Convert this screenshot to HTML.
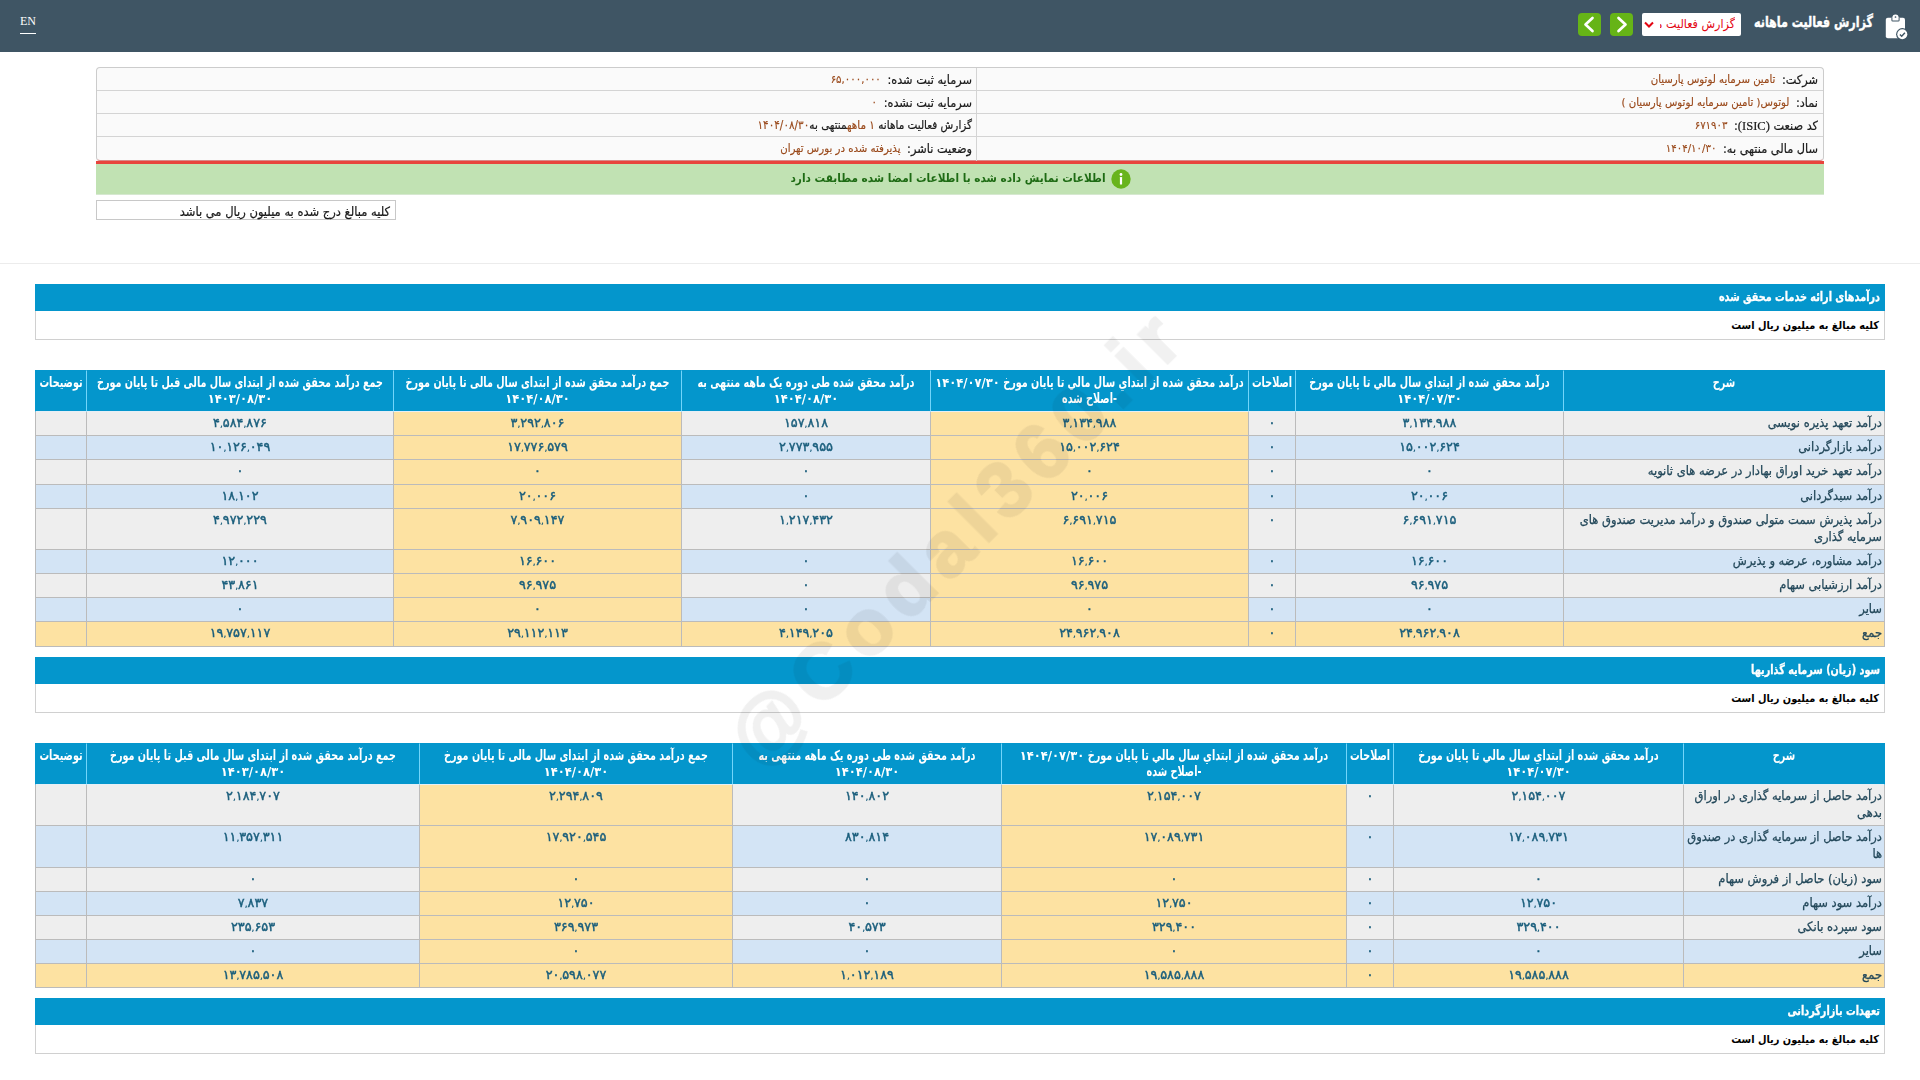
<!DOCTYPE html>
<html lang="fa" dir="rtl">
<head>
<meta charset="utf-8">
<title>گزارش فعالیت ماهانه</title>
<style>
* { box-sizing: border-box; }
html, body { margin: 0; padding: 0; }
body {
  width: 1920px; height: 1080px; overflow: hidden; position: relative;
  background: #fff; color: #000;
  font-family: "DejaVu Sans Condensed", "DejaVu Sans", "Liberation Sans", sans-serif;
  font-stretch: condensed;
  font-size: 12.8px;
  opacity: 0.999;
}
/* ---------- top bar ---------- */
.bar { position: absolute; left: 0; top: 0; width: 1920px; height: 52px; background: #3f5564; }
.bar .en { position: absolute; left: 20px; top: 14px; width: 16px; color: #fff; direction: ltr;
  font-family: "Liberation Serif", serif; font-stretch: normal; font-size: 12px; line-height: 14px; }
.bar .en i { position: absolute; left: 0; top: 19px; width: 16px; height: 1px; background: #fff; }
.bar .title { position: absolute; left: 1700px; width: 173px; top: 13px; text-align: right; color: #fff; font-weight: bold; font-size: 12.4px; line-height: 20px; white-space: nowrap;
  transform: scaleY(1.22); transform-origin: 50% 78%; -webkit-text-stroke: 0.3px #fff; }
.bar .clip { position: absolute; left: 1880px; top: 10px; }
.bar .sel { position: absolute; left: 1642px; top: 13px; width: 99px; height: 23px; background: #fff; border-radius: 2px; }
.bar .sel span { position: absolute; left: 18px; width: 75px; top: 0; height: 23px; overflow: hidden; text-align: right;
  color: #e30613; font-size: 12.4px; line-height: 22px; white-space: nowrap; }
.bar .sel svg { position: absolute; left: 2px; top: 8px; }
.bar .nav { position: absolute; top: 13px; width: 23px; height: 23px; border-radius: 4px; background: #66b417; }
.bar .nav svg { position: absolute; left: 0; top: 0; }

/* ---------- info box ---------- */
.info { position: absolute; left: 96px; top: 67px; width: 1728px; height: 94px; background: #fafafa;
  border: 1px solid #cccccc; border-bottom: 1px solid #d98a8a; border-radius: 4px; }
.info .hl { position: absolute; left: 0; width: 1726px; height: 1px; background: #d4d4d4; }
.info .vl { position: absolute; left: 879px; top: 0; width: 1px; height: 93px; background: #d4d4d4; }
.info .c { position: absolute; height: 23px; line-height: 23px; white-space: nowrap; font-size: 12.6px; color: #1a1a1a; -webkit-text-stroke: 0.2px #1a1a1a; }
.info .c b { font-weight: normal; font-size: 11.3px; color: #9a4a1c; -webkit-text-stroke: 0.15px #9a4a1c; margin-right: 3px; position: relative; top: -1px; }
.info .c b.z { margin-right: 0; top: 0; }
.info .c.sm { font-size: 11.6px; }
.info .c.sm b { font-size: 11.6px; }
.info .c .lat { font-family: "Liberation Serif", serif; font-stretch: normal; font-size: 12.5px; }
.info .c.r { right: 5px; }
.info .c.l { right: 851px; }
.redline { position: absolute; left: 96px; top: 161px; width: 1728px; height: 3px; background: #e8443d; }
.green { position: absolute; left: 96px; top: 164px; width: 1728px; height: 31px; background: #c1e2b3; border-bottom: 1px solid #d6e8d0; }
.green .tx { position: absolute; left: 600px; width: 409.500px; top: 0; text-align: right; white-space: nowrap;
  color: #1e6b14; font-weight: bold; font-size: 11.7px; line-height: 28px; }
.green .ic { position: absolute; left: 1015px; top: 5px; }
.note { position: absolute; left: 96px; top: 200px; width: 300px; height: 20px; border: 1px solid #c8c8c8; background: #fff;
  font-size: 12.8px; line-height: 19px; padding-right: 5px; padding-top: 1px; white-space: nowrap; color: #1a1a1a; -webkit-text-stroke: 0.2px #1a1a1a; }
.sep { position: absolute; left: 0; top: 263px; width: 1920px; height: 1px; background: #ececec; }

/* ---------- sections ---------- */
.sec { position: absolute; left: 35px; width: 1850px; height: 56px; }
.sec .st { height: 27px; background: #0496cc; color: #fff; font-weight: bold; font-size: 10.75px; line-height: 27px; padding-right: 5px; white-space: nowrap; }
.sec .sn { height: 29px; border: 1px solid #d0d0d0; border-top: none; background: #fff; font-weight: bold; font-size: 10.9px; line-height: 29px; padding-right: 5px; white-space: nowrap; }

.sec .st span { display: inline-block; transform: scaleY(1.18); transform-origin: 50% 62%; -webkit-text-stroke: 0.25px #fff; }

/* ---------- data tables ---------- */
table.dt { position: absolute; border-collapse: separate; border-spacing: 0; table-layout: fixed; direction: rtl; }
table.dt th, table.dt td { padding: 0 2px; overflow: hidden; border: 0 solid #bbbbbb; border-left-width: 1px; border-bottom-width: 1px; }
table.dt th:first-child, table.dt td:first-child { border-right-width: 1px; }
table.dt th { background: #0496cc; color: #fff; font-weight: bold; font-size: 10.7px; line-height: 16px; text-align: center; vertical-align: top;
  padding-top: 0; border-top: 1px solid #0496cc; border-left-color: #73d5fa; border-bottom-color: #e6eff6; }
table.dt th:first-child { border-right-color: #0496cc; }
table.dt th:last-child { border-left-color: #0496cc; }
table.dt th div { height: 40px; padding-top: 5px; overflow: hidden; white-space: nowrap; }
table.dt th .hx { display: inline-block; line-height: 16px; transform: scaleY(1.3); transform-origin: 50% 73%; }
table.dt th .dg { font-size: 12.8px; line-height: 14px; }
table.dt td { vertical-align: top; font-size: 12.8px; line-height: 17px; padding-top: 2px; }
table.dt td.d { text-align: right; color: #23485a; -webkit-text-stroke: 0.25px #23485a; }
table.dt td.n { text-align: center; direction: ltr; color: #1a5e7c; font-family: "DejaVu Sans", "Liberation Sans", sans-serif; font-stretch: normal; font-weight: normal; -webkit-text-stroke: 0.45px #1a5e7c; }
table.dt td.n i { font-style: normal; font-size: 9px; -webkit-text-stroke: 0.2px #1a5e7c; }
tr.g td { background: #eeeeee; }
tr.b td { background: #d3e4f5; }
tr.sum td { background: #fde2a2; }
table.dt td.y { background: #fde2a2; }

/* ---------- watermark ---------- */
.wm { position: absolute; left: 557px; top: 486px; width: 800px; height: 100px; line-height: 100px; text-align: center; direction: ltr;
  font-family: "Liberation Sans", sans-serif; font-stretch: normal; font-weight: bold; font-size: 78px; letter-spacing: 9.5px; color: #000; -webkit-text-stroke: 2.500px #000; opacity: 0.06;
  transform: rotate(-45deg); transform-origin: 50% 50%; white-space: nowrap; pointer-events: none; }

</style>
</head>
<body>
<div class="bar">
  <div class="en">EN<i></i></div>
  <svg class="clip" width="32" height="32" viewBox="0 0 32 32">
    <rect x="5.800" y="7.700" width="19.200" height="20.500" rx="2" fill="#fff"/>
    <path d="M11.400 7.700 V10.200 a1.300 1.300 0 0 0 1.300 1.300 h5.600 a1.300 1.300 0 0 0 1.300 -1.300 V7.700 z" fill="#3f5564"/>
    <path d="M12.400 10.500 V7.600 a3.100 3.100 0 0 1 6.200 0 V10.500 z" fill="#fff"/>
    <circle cx="15.500" cy="7" r="0.850" fill="#3f5564"/>
    <circle cx="22.300" cy="24.300" r="6.200" fill="#3f5564"/>
    <circle cx="22.300" cy="24.300" r="5" fill="#fff"/>
    <path d="M19.900 24.500 L21.700 26.200 L24.900 22.700" fill="none" stroke="#3f5564" stroke-width="1.400"/>
  </svg>
  <div class="title">گزارش فعالیت ماهانه</div>
  <div class="sel"><span>گزارش فعالیت ماهانه</span>
    <svg width="10" height="8" viewBox="0 0 10 8"><path d="M1 1.500 L5 5.500 L9 1.500" fill="none" stroke="#e30613" stroke-width="2"/></svg>
  </div>
  <div class="nav" style="left:1610px"><svg width="23" height="23" viewBox="0 0 23 23"><path d="M8.500 5 L15.500 11.500 L8.500 18" fill="none" stroke="#fff" stroke-width="2.700" stroke-linecap="round" stroke-linejoin="round"/></svg></div>
  <div class="nav" style="left:1578px"><svg width="23" height="23" viewBox="0 0 23 23"><path d="M14.500 5 L7.500 11.500 L14.500 18" fill="none" stroke="#fff" stroke-width="2.700" stroke-linecap="round" stroke-linejoin="round"/></svg></div>
</div>

<div class="info">
  <div class="hl" style="top:22px"></div>
  <div class="hl" style="top:45px"></div>
  <div class="hl" style="top:68px"></div>
  <div class="vl"></div>
  <div class="c r" style="top:0">شرکت: <b>تامین سرمایه لوتوس پارسیان</b></div>
  <div class="c r" style="top:23px">نماد: <b>لوتوس( تامین سرمایه لوتوس پارسیان )</b></div>
  <div class="c r" style="top:46px">کد صنعت <span class="lat">(ISIC)</span>: <b>۶۷۱۹۰۳</b></div>
  <div class="c r" style="top:69px">سال مالی منتهی به: <b>۱۴۰۴/۱۰/۳۰</b></div>
  <div class="c l" style="top:0">سرمایه ثبت شده: <b>۶۵,۰۰۰,۰۰۰</b></div>
  <div class="c l" style="top:23px">سرمایه ثبت نشده: <b>۰</b></div>
  <div class="c l sm" style="top:46px">گزارش فعالیت ماهانه <b class="z">۱ ماهه</b>منتهی به<b class="z">۱۴۰۴/۰۸/۳۰</b></div>
  <div class="c l" style="top:69px">وضعیت ناشر: <b>پذیرفته شده در بورس تهران</b></div>
</div>
<div class="redline"></div>
<div class="green"><div class="tx">اطلاعات نمایش داده شده با اطلاعات امضا شده مطابقت دارد</div>
  <svg class="ic" width="20" height="20" viewBox="0 0 20 20"><circle cx="10" cy="10" r="9.700" fill="#68b41c"/><circle cx="10" cy="5.500" r="1.400" fill="#fff"/><rect x="8.900" y="8" width="2.200" height="7.500" rx="0.600" fill="#fff"/></svg>
</div>
<div class="note">کلیه مبالغ درج شده به میلیون ریال می باشد</div>
<div class="sep"></div>

<div class="sec" style="top:284px"><div class="st"><span>درآمدهای ارائه خدمات محقق شده</span></div><div class="sn">کلیه مبالغ به میلیون ریال است</div></div>
<table class="dt t1" style="top:370px;left:35px;width:1850px">
<colgroup><col style="width:322px"><col style="width:268px"><col style="width:47px"><col style="width:318px"><col style="width:249px"><col style="width:288px"><col style="width:307px"><col style="width:51px"></colgroup>
<thead><tr style="height:42px"><th><div><span class="hx">شرح</span></div></th><th><div><span class="hx">درآمد محقق شده از ابتداي سال مالي تا پايان مورخ</span><br><span class="dg">۱۴۰۴/۰۷/۳۰</span></div></th><th><div><span class="hx">اصلاحات</span></div></th><th><div><span class="hx">درآمد محقق شده از ابتداي سال مالي تا پايان مورخ</span> <span class="dg">۱۴۰۴/۰۷/۳۰</span><br><span class="hx">-اصلاح شده</span></div></th><th><div><span class="hx">درآمد محقق شده طی دوره یک ماهه منتهی به</span><br><span class="dg">۱۴۰۴/۰۸/۳۰</span></div></th><th><div><span class="hx">جمع درآمد محقق شده از ابتدای سال مالی تا پایان مورخ</span><br><span class="dg">۱۴۰۴/۰۸/۳۰</span></div></th><th><div><span class="hx">جمع درآمد محقق شده از ابتدای سال مالی قبل تا پایان مورخ</span><br><span class="dg">۱۴۰۳/۰۸/۳۰</span></div></th><th><div><span class="hx">توضیحات</span></div></th></tr></thead>
<tbody>
<tr class="g" style="height:24px"><td class="d">درآمد تعهد پذیره نویسی</td><td class="n">۳<i>,</i>۱۳۴<i>,</i>۹۸۸</td><td class="n">۰</td><td class="n y">۳<i>,</i>۱۳۴<i>,</i>۹۸۸</td><td class="n">۱۵۷<i>,</i>۸۱۸</td><td class="n y">۳<i>,</i>۲۹۲<i>,</i>۸۰۶</td><td class="n">۴<i>,</i>۵۸۴<i>,</i>۸۷۶</td><td></td></tr>
<tr class="b" style="height:24px"><td class="d">درآمد بازارگردانی</td><td class="n">۱۵<i>,</i>۰۰۲<i>,</i>۶۲۴</td><td class="n">۰</td><td class="n y">۱۵<i>,</i>۰۰۲<i>,</i>۶۲۴</td><td class="n">۲<i>,</i>۷۷۳<i>,</i>۹۵۵</td><td class="n y">۱۷<i>,</i>۷۷۶<i>,</i>۵۷۹</td><td class="n">۱۰<i>,</i>۱۲۶<i>,</i>۰۴۹</td><td></td></tr>
<tr class="g" style="height:25px"><td class="d">درآمد تعهد خرید اوراق بهادار در عرضه های ثانویه</td><td class="n">۰</td><td class="n">۰</td><td class="n y">۰</td><td class="n">۰</td><td class="n y">۰</td><td class="n">۰</td><td></td></tr>
<tr class="b" style="height:24px"><td class="d">درآمد سبدگردانی</td><td class="n">۲۰<i>,</i>۰۰۶</td><td class="n">۰</td><td class="n y">۲۰<i>,</i>۰۰۶</td><td class="n">۰</td><td class="n y">۲۰<i>,</i>۰۰۶</td><td class="n">۱۸<i>,</i>۱۰۲</td><td></td></tr>
<tr class="g" style="height:41px"><td class="d">درآمد پذیرش سمت متولی صندوق و درآمد مدیریت صندوق های سرمایه گذاری</td><td class="n">۶<i>,</i>۶۹۱<i>,</i>۷۱۵</td><td class="n">۰</td><td class="n y">۶<i>,</i>۶۹۱<i>,</i>۷۱۵</td><td class="n">۱<i>,</i>۲۱۷<i>,</i>۴۳۲</td><td class="n y">۷<i>,</i>۹۰۹<i>,</i>۱۴۷</td><td class="n">۴<i>,</i>۹۷۲<i>,</i>۲۲۹</td><td></td></tr>
<tr class="b" style="height:24px"><td class="d">درآمد مشاوره، عرضه و پذیرش</td><td class="n">۱۶<i>,</i>۶۰۰</td><td class="n">۰</td><td class="n y">۱۶<i>,</i>۶۰۰</td><td class="n">۰</td><td class="n y">۱۶<i>,</i>۶۰۰</td><td class="n">۱۲<i>,</i>۰۰۰</td><td></td></tr>
<tr class="g" style="height:24px"><td class="d">درآمد ارزشیابی سهام</td><td class="n">۹۶<i>,</i>۹۷۵</td><td class="n">۰</td><td class="n y">۹۶<i>,</i>۹۷۵</td><td class="n">۰</td><td class="n y">۹۶<i>,</i>۹۷۵</td><td class="n">۴۳<i>,</i>۸۶۱</td><td></td></tr>
<tr class="b" style="height:24px"><td class="d">سایر</td><td class="n">۰</td><td class="n">۰</td><td class="n y">۰</td><td class="n">۰</td><td class="n y">۰</td><td class="n">۰</td><td></td></tr>
<tr class="sum" style="height:25px"><td class="d">جمع</td><td class="n">۲۴<i>,</i>۹۶۲<i>,</i>۹۰۸</td><td class="n">۰</td><td class="n y">۲۴<i>,</i>۹۶۲<i>,</i>۹۰۸</td><td class="n">۴<i>,</i>۱۴۹<i>,</i>۲۰۵</td><td class="n y">۲۹<i>,</i>۱۱۲<i>,</i>۱۱۳</td><td class="n">۱۹<i>,</i>۷۵۷<i>,</i>۱۱۷</td><td></td></tr>
</tbody></table>
<div class="sec" style="top:657px"><div class="st"><span>سود (زیان) سرمایه گذاریها</span></div><div class="sn">کلیه مبالغ به میلیون ریال است</div></div>
<table class="dt t2" style="top:743px;left:35px;width:1850px">
<colgroup><col style="width:202px"><col style="width:290px"><col style="width:47px"><col style="width:345px"><col style="width:269px"><col style="width:313px"><col style="width:333px"><col style="width:51px"></colgroup>
<thead><tr style="height:42px"><th><div><span class="hx">شرح</span></div></th><th><div><span class="hx">درآمد محقق شده از ابتداي سال مالي تا پايان مورخ</span><br><span class="dg">۱۴۰۴/۰۷/۳۰</span></div></th><th><div><span class="hx">اصلاحات</span></div></th><th><div><span class="hx">درآمد محقق شده از ابتداي سال مالي تا پايان مورخ</span> <span class="dg">۱۴۰۴/۰۷/۳۰</span><br><span class="hx">-اصلاح شده</span></div></th><th><div><span class="hx">درآمد محقق شده طی دوره یک ماهه منتهی به</span><br><span class="dg">۱۴۰۴/۰۸/۳۰</span></div></th><th><div><span class="hx">جمع درآمد محقق شده از ابتدای سال مالی تا پایان مورخ</span><br><span class="dg">۱۴۰۴/۰۸/۳۰</span></div></th><th><div><span class="hx">جمع درآمد محقق شده از ابتدای سال مالی قبل تا پایان مورخ</span><br><span class="dg">۱۴۰۳/۰۸/۳۰</span></div></th><th><div><span class="hx">توضیحات</span></div></th></tr></thead>
<tbody>
<tr class="g" style="height:41px"><td class="d">درآمد حاصل از سرمایه گذاری در اوراق بدهی</td><td class="n">۲<i>,</i>۱۵۴<i>,</i>۰۰۷</td><td class="n">۰</td><td class="n y">۲<i>,</i>۱۵۴<i>,</i>۰۰۷</td><td class="n">۱۴۰<i>,</i>۸۰۲</td><td class="n y">۲<i>,</i>۲۹۴<i>,</i>۸۰۹</td><td class="n">۲<i>,</i>۱۸۴<i>,</i>۷۰۷</td><td></td></tr>
<tr class="b" style="height:42px"><td class="d">درآمد حاصل از سرمایه گذاری در صندوق ها</td><td class="n">۱۷<i>,</i>۰۸۹<i>,</i>۷۳۱</td><td class="n">۰</td><td class="n y">۱۷<i>,</i>۰۸۹<i>,</i>۷۳۱</td><td class="n">۸۳۰<i>,</i>۸۱۴</td><td class="n y">۱۷<i>,</i>۹۲۰<i>,</i>۵۴۵</td><td class="n">۱۱<i>,</i>۳۵۷<i>,</i>۳۱۱</td><td></td></tr>
<tr class="g" style="height:24px"><td class="d">سود (زیان) حاصل از فروش سهام</td><td class="n">۰</td><td class="n">۰</td><td class="n y">۰</td><td class="n">۰</td><td class="n y">۰</td><td class="n">۰</td><td></td></tr>
<tr class="b" style="height:24px"><td class="d">درآمد سود سهام</td><td class="n">۱۲<i>,</i>۷۵۰</td><td class="n">۰</td><td class="n y">۱۲<i>,</i>۷۵۰</td><td class="n">۰</td><td class="n y">۱۲<i>,</i>۷۵۰</td><td class="n">۷<i>,</i>۸۳۷</td><td></td></tr>
<tr class="g" style="height:24px"><td class="d">سود سپرده بانکی</td><td class="n">۳۲۹<i>,</i>۴۰۰</td><td class="n">۰</td><td class="n y">۳۲۹<i>,</i>۴۰۰</td><td class="n">۴۰<i>,</i>۵۷۳</td><td class="n y">۳۶۹<i>,</i>۹۷۳</td><td class="n">۲۳۵<i>,</i>۶۵۳</td><td></td></tr>
<tr class="b" style="height:24px"><td class="d">سایر</td><td class="n">۰</td><td class="n">۰</td><td class="n y">۰</td><td class="n">۰</td><td class="n y">۰</td><td class="n">۰</td><td></td></tr>
<tr class="sum" style="height:24px"><td class="d">جمع</td><td class="n">۱۹<i>,</i>۵۸۵<i>,</i>۸۸۸</td><td class="n">۰</td><td class="n y">۱۹<i>,</i>۵۸۵<i>,</i>۸۸۸</td><td class="n">۱<i>,</i>۰۱۲<i>,</i>۱۸۹</td><td class="n y">۲۰<i>,</i>۵۹۸<i>,</i>۰۷۷</td><td class="n">۱۳<i>,</i>۷۸۵<i>,</i>۵۰۸</td><td></td></tr>
</tbody></table>
<div class="sec" style="top:998px"><div class="st"><span>تعهدات بازارگردانی</span></div><div class="sn">کلیه مبالغ به میلیون ریال است</div></div>
<div class="wm">@Codal360.ir</div>
</body>
</html>
